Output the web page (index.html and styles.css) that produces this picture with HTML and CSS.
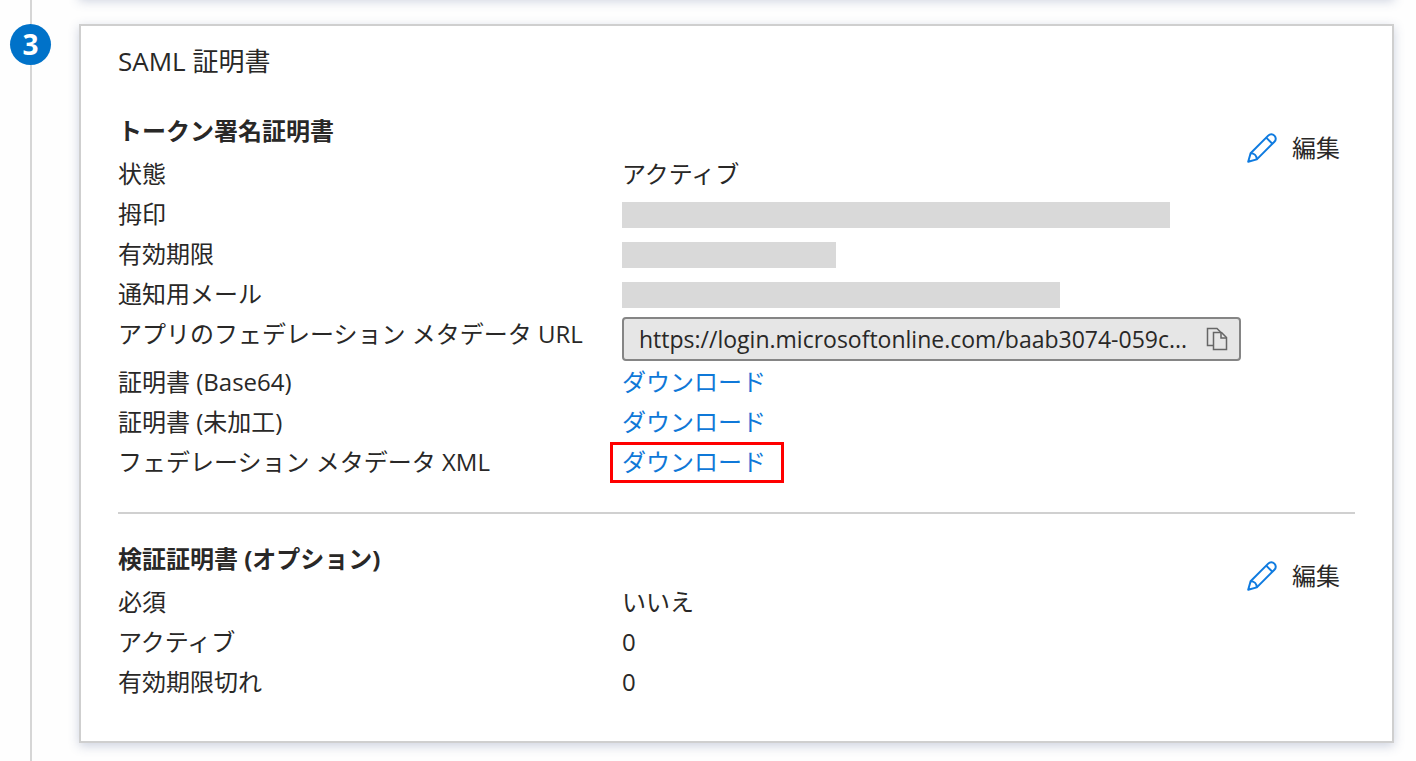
FILE: index.html
```html
<!DOCTYPE html>
<html lang="ja">
<head>
    <meta charset="UTF-8">
    <meta name="viewport" content="width=device-width, initial-scale=1.0">
    <title>SAML 証明書</title>
    <link rel="stylesheet" href="styles.css">
</head>
<body>
    <main class="page">
        <div class="timeline">
            <div class="line line-top"></div>
            <div class="step-number">3</div>
            <div class="line line-rest"></div>
        </div>
        <div class="cards">
            <div class="card card-previous"></div>
            <section class="card">
                <h1 class="title">SAML 証明書</h1>
                <div class="group">
                    <div class="details">
                        <h2 class="heading">トークン署名証明書</h2>
                        <dl class="rows">
                            <dt>状態</dt>
                            <dd>アクティブ</dd>
                            <dt>拇印</dt>
                            <dd><span class="masked masked-long"></span></dd>
                            <dt>有効期限</dt>
                            <dd><span class="masked masked-short"></span></dd>
                            <dt>通知用メール</dt>
                            <dd><span class="masked masked-medium"></span></dd>
                            <dt><label for="metadata-url">アプリのフェデレーション メタデータ URL</label></dt>
                            <dd class="url-cell">
                                <div class="url-box">
                                    <input class="url" id="metadata-url" type="text" readonly value="https://login.microsoftonline.com/baab3074-059c...">
                                    <button class="copy" type="button" aria-label="コピー">
                                        <svg width="22" height="24" viewBox="0 0 22 24" fill="none" stroke="#666" stroke-width="1.5">
                                            <path d="M7 18.5H1.5V1.5H11L14.5 5"/>
                                            <path d="M7.5 5.5H15.5L20.5 10.5V22.5H7.5Z"/>
                                            <path d="M15 5.5V11H20.5"/>
                                        </svg>
                                    </button>
                                </div>
                            </dd>
                            <dt>証明書 (Base64)</dt>
                            <dd><a class="download" href="#">ダウンロード</a></dd>
                            <dt>証明書 (未加工)</dt>
                            <dd><a class="download" href="#">ダウンロード</a></dd>
                            <dt>フェデレーション メタデータ XML</dt>
                            <dd><a class="download highlighted" href="#">ダウンロード</a></dd>
                        </dl>
                    </div>
                    <button class="edit" type="button">
                        <svg width="30" height="30" viewBox="0 0 30 30" fill="none" stroke="#0f7be0" stroke-width="2" stroke-linejoin="round">
                            <path d="M1.2 28.8L3.6 20.2L21.2 2.6C23 .8 25.6 .8 27.4 2.6C29.2 4.4 29.2 7 27.4 8.8L9.8 26.4Z"/>
                            <path d="M19.2 4.6L25.4 10.8"/>
                            <path d="M3.6 20.2C7.2 20.2 9.8 22.8 9.8 26.4"/>
                        </svg>
                        編集
                    </button>
                </div>
                <div class="group">
                    <div class="details">
                        <h2 class="heading">検証証明書 (オプション)</h2>
                        <dl class="rows">
                            <dt>必須</dt>
                            <dd>いいえ</dd>
                            <dt>アクティブ</dt>
                            <dd>0</dd>
                            <dt>有効期限切れ</dt>
                            <dd>0</dd>
                        </dl>
                    </div>
                    <button class="edit" type="button">
                        <svg width="30" height="30" viewBox="0 0 30 30" fill="none" stroke="#0f7be0" stroke-width="2" stroke-linejoin="round">
                            <path d="M1.2 28.8L3.6 20.2L21.2 2.6C23 .8 25.6 .8 27.4 2.6C29.2 4.4 29.2 7 27.4 8.8L9.8 26.4Z"/>
                            <path d="M19.2 4.6L25.4 10.8"/>
                            <path d="M3.6 20.2C7.2 20.2 9.8 22.8 9.8 26.4"/>
                        </svg>
                        編集
                    </button>
                </div>
            </section>
        </div>
    </main>
</body>
</html>
```
FILE: styles.css
```css
*{
    box-sizing: border-box;
}
body{
    margin:0;
    background-color: #fefefe;
    color: #292827;
    font-family: "Open Sans", "Noto Sans CJK JP", sans-serif;
    font-size: 24px;
    line-height: 40px;
}
button, input{
    font-family: inherit;
    font-size: inherit;
    color: inherit;
}
.page{
    display: flex;
    min-height: 100vh;
    overflow: hidden;
}
.timeline{
    display: flex;
    flex-direction: column;
    align-items: center;
    width: 61px;
    flex-shrink: 0;
}
.line{
    width: 2px;
    background-color: #d6d6d6;
}
.line-top{
    height: 24px;
}
.line-rest{
    flex: 1;
}
.step-number{
    width: 41px;
    height: 41px;
    border-radius: 50%;
    background-color: #0072c9;
    color: white;
    font-size: 28px;
    font-weight: 700;
    text-align: center;
}
.cards{
    flex: 1;
    min-width: 0;
    padding: 0 22px 18px 18px;
}
.card{
    padding: 15px 37px 39px;
    border: 2px solid #cfcfcf;
    background-color: white;
    box-shadow: 0 3px 10px rgba(60, 80, 130, 0.25);
}
.card-previous{
    height: 60px;
    margin-top: -62px;
    margin-bottom: 26px;
    padding: 0;
}
.title{
    margin: 0 0 30px;
    font-size: 26px;
    font-weight: 400;
}
.group{
    display: flex;
    align-items: flex-start;
}
.group + .group{
    margin-top: 30px;
    padding-top: 25px;
    border-top: 2px solid #d0d0d0;
}
.details{
    flex: 1;
    min-width: 0;
}
.heading{
    margin: 0 0 3px;
    font-size: 24px;
    font-weight: 700;
}
.rows{
    display: grid;
    grid-template-columns: 504px 1fr;
    margin: 0;
}
dd{
    display: flex;
    align-items: center;
    min-height: 40px;
    margin: 0;
}
.masked{
    height: 26px;
    margin-top: 2px;
    background-color: #d9d9d9;
}
.masked-long{
    width: 548px;
}
.masked-medium{
    width: 438px;
}
.masked-short{
    width: 214px;
}
.url-cell{
    height: 48px;
    padding-top: 2px;
}
.url-box{
    display: flex;
    align-items: center;
    width: 619px;
    height: 44px;
    padding: 0 11px 0 15px;
    border: 2px solid #858585;
    border-radius: 4px;
    background-color: #e6e6e6;
}
.url{
    flex: 1;
    min-width: 0;
    padding: 0;
    border: none;
    background: none;
    font-size: 23px;
    outline: none;
}
.copy{
    display: flex;
    padding: 0;
    border: none;
    background: none;
    cursor: pointer;
}
.download{
    position: relative;
    color: #0f78d8;
    text-decoration: none;
}
.download:hover{
    text-decoration: underline;
}
/* red frame drawn over the row, wider than the link */
.highlighted::after{
    content: "";
    position: absolute;
    inset: 0 -18px -1px -12px;
    border: 3px solid #ff0000;
}
.edit{
    display: flex;
    align-items: center;
    gap: 15px;
    margin-top: 17px;
    padding: 0 15px 0 0;
    border: none;
    background: none;
    line-height: 40px;
    cursor: pointer;
}
```
